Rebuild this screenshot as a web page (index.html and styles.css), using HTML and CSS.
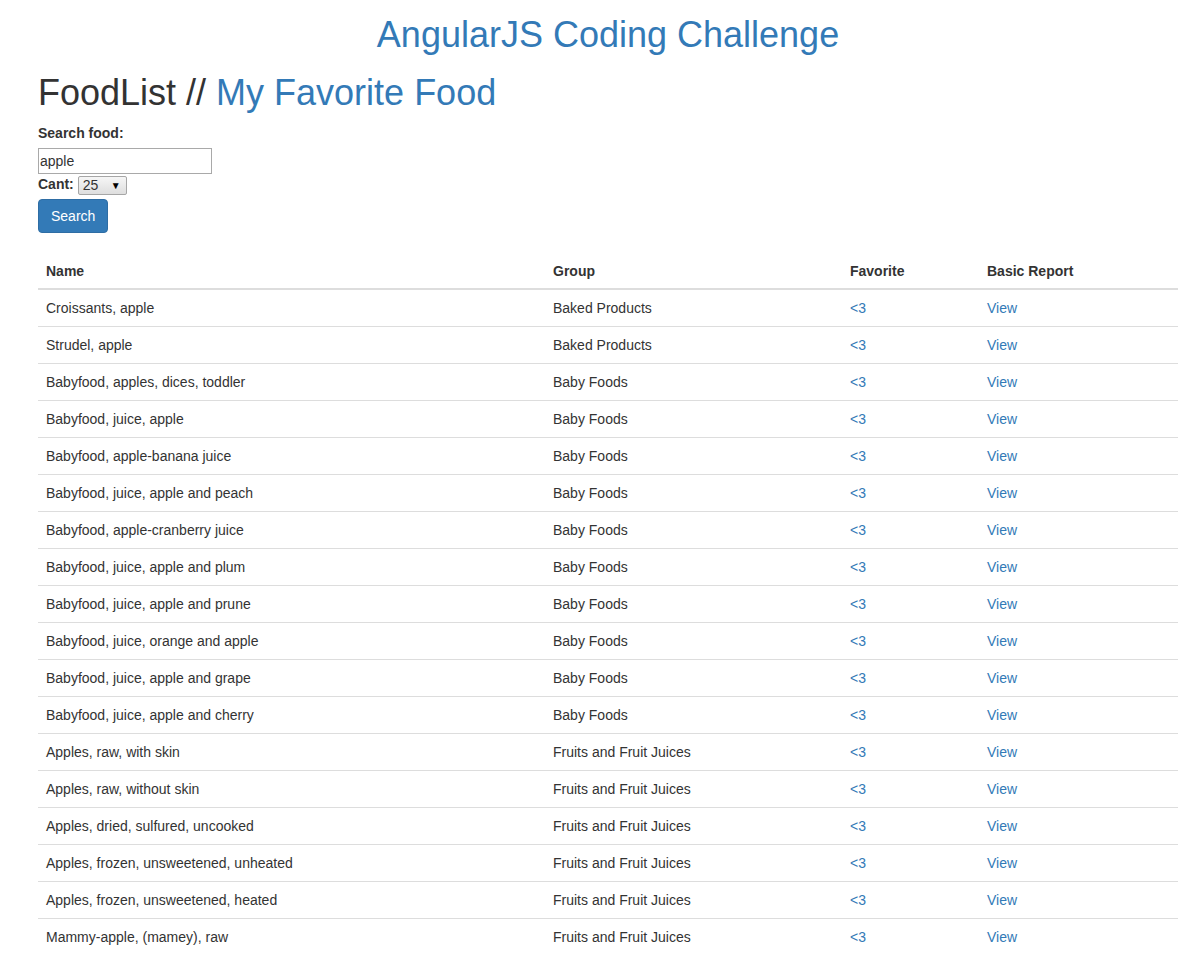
FILE: index.html
```html
<!DOCTYPE html>
<html>
<head>
<meta charset="utf-8">
<title>AngularJS Coding Challenge</title>
<link rel="stylesheet" href="styles.css">
</head>
<body>
<div class="container">
  <h1 class="title">AngularJS Coding Challenge</h1>
  <h1 class="subtitle">FoodList // <a href="#">My Favorite Food</a></h1>
  <form class="search-form">
    <label class="lbl">Search food:</label><br>
    <input class="search-input" type="text" value="apple"><br>
    <label class="lbl">Cant:</label> <span class="fake-select"><span>25</span><span class="arrow">&#9660;</span></span><br>
    <button class="btn-primary" type="button">Search</button>
  </form>
  <table class="food-table">
    <colgroup>
      <col class="c-name"><col class="c-group"><col class="c-fav"><col class="c-rep">
    </colgroup>
    <thead>
      <tr><th>Name</th><th>Group</th><th>Favorite</th><th>Basic Report</th></tr>
    </thead>
    <tbody>
      <tr><td>Croissants, apple</td><td>Baked Products</td><td><a href="#">&lt;3</a></td><td><a href="#">View</a></td></tr>
      <tr><td>Strudel, apple</td><td>Baked Products</td><td><a href="#">&lt;3</a></td><td><a href="#">View</a></td></tr>
      <tr><td>Babyfood, apples, dices, toddler</td><td>Baby Foods</td><td><a href="#">&lt;3</a></td><td><a href="#">View</a></td></tr>
      <tr><td>Babyfood, juice, apple</td><td>Baby Foods</td><td><a href="#">&lt;3</a></td><td><a href="#">View</a></td></tr>
      <tr><td>Babyfood, apple-banana juice</td><td>Baby Foods</td><td><a href="#">&lt;3</a></td><td><a href="#">View</a></td></tr>
      <tr><td>Babyfood, juice, apple and peach</td><td>Baby Foods</td><td><a href="#">&lt;3</a></td><td><a href="#">View</a></td></tr>
      <tr><td>Babyfood, apple-cranberry juice</td><td>Baby Foods</td><td><a href="#">&lt;3</a></td><td><a href="#">View</a></td></tr>
      <tr><td>Babyfood, juice, apple and plum</td><td>Baby Foods</td><td><a href="#">&lt;3</a></td><td><a href="#">View</a></td></tr>
      <tr><td>Babyfood, juice, apple and prune</td><td>Baby Foods</td><td><a href="#">&lt;3</a></td><td><a href="#">View</a></td></tr>
      <tr><td>Babyfood, juice, orange and apple</td><td>Baby Foods</td><td><a href="#">&lt;3</a></td><td><a href="#">View</a></td></tr>
      <tr><td>Babyfood, juice, apple and grape</td><td>Baby Foods</td><td><a href="#">&lt;3</a></td><td><a href="#">View</a></td></tr>
      <tr><td>Babyfood, juice, apple and cherry</td><td>Baby Foods</td><td><a href="#">&lt;3</a></td><td><a href="#">View</a></td></tr>
      <tr><td>Apples, raw, with skin</td><td>Fruits and Fruit Juices</td><td><a href="#">&lt;3</a></td><td><a href="#">View</a></td></tr>
      <tr><td>Apples, raw, without skin</td><td>Fruits and Fruit Juices</td><td><a href="#">&lt;3</a></td><td><a href="#">View</a></td></tr>
      <tr><td>Apples, dried, sulfured, uncooked</td><td>Fruits and Fruit Juices</td><td><a href="#">&lt;3</a></td><td><a href="#">View</a></td></tr>
      <tr><td>Apples, frozen, unsweetened, unheated</td><td>Fruits and Fruit Juices</td><td><a href="#">&lt;3</a></td><td><a href="#">View</a></td></tr>
      <tr><td>Apples, frozen, unsweetened, heated</td><td>Fruits and Fruit Juices</td><td><a href="#">&lt;3</a></td><td><a href="#">View</a></td></tr>
      <tr><td>Mammy-apple, (mamey), raw</td><td>Fruits and Fruit Juices</td><td><a href="#">&lt;3</a></td><td><a href="#">View</a></td></tr>
    </tbody>
  </table>
</div>
</body>
</html>
```

FILE: styles.css
```css
html, body {
  margin: 0;
  padding: 0;
  background: #fff;
}
body {
  font-family: "Liberation Sans", Arial, Helvetica, sans-serif;
  font-size: 14px;
  line-height: 1.42857143;
  color: #333;
}
a {
  color: #337ab7;
  text-decoration: none;
}
.container {
  width: 1140px;
  margin-left: 38px;
}
.title, .subtitle {
  font-family: inherit;
  font-weight: 500;
  font-size: 36px;
  line-height: 1.1;
  margin: 0;
}
.title {
  color: #337ab7;
  text-align: center;
  margin-top: 15px;
}
.subtitle {
  margin-top: 18px;
  margin-bottom: 11px;
}
.search-form {
  margin: 0;
}
.lbl {
  display: inline-block;
  max-width: 100%;
  margin-bottom: 5px;
  font-weight: bold;
}
.search-input {
  box-sizing: border-box;
  width: 174px;
  height: 26px;
  margin: 0;
  padding: 2px 2px 2px 1px;
  border: 1px solid #a9a9a9;
  font-family: inherit;
  font-size: 14px;
  line-height: 20px;
  color: #333;
  vertical-align: top;
  outline: none;
}
.fake-select {
  display: inline-flex;
  align-items: center;
  justify-content: space-between;
  box-sizing: border-box;
  width: 49px;
  height: 19px;
  padding: 0 5px 0 4px;
  border: 1px solid #a6a6a6;
  border-radius: 2px;
  background: linear-gradient(#f6f6f6, #dedede);
  font-size: 14px;
  line-height: 17px;
  color: #333;
  vertical-align: -1px;
}
.fake-select .arrow {
  font-size: 10px;
  color: #000;
  line-height: 17px;
}
.btn-primary {
  display: inline-block;
  margin: 0;
  padding: 6px 12px;
  font-family: inherit;
  font-size: 14px;
  line-height: 20px;
  color: #fff;
  background: #337ab7;
  border: 1px solid #2e6da4;
  border-radius: 4px;
  cursor: pointer;
}
.food-table {
  width: 1140px;
  margin-top: 20px;
  margin-bottom: 20px;
  border-collapse: collapse;
  border-spacing: 0;
  table-layout: fixed;
}
.c-name { width: 507px; }
.c-group { width: 297px; }
.c-fav { width: 137px; }
.c-rep { width: 199px; }
.food-table th,
.food-table td {
  padding: 8px;
  line-height: 20px;
  text-align: left;
  vertical-align: top;
}
.food-table th {
  padding-bottom: 7px;
  font-weight: bold;
  border-bottom: 2px solid #ddd;
  vertical-align: bottom;
}
.food-table td {
  border-top: 1px solid #ddd;
}
```
